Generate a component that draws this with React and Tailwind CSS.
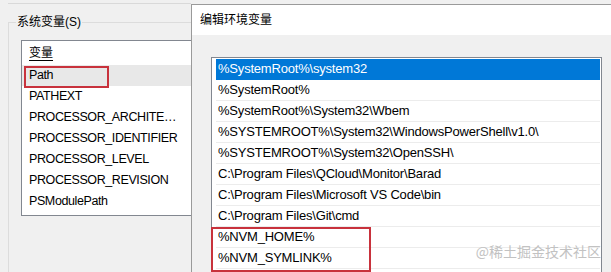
import React from 'react';

const sysVars = [
  'Path',
  'PATHEXT',
  'PROCESSOR_ARCHITECTURE',
  'PROCESSOR_IDENTIFIER',
  'PROCESSOR_LEVEL',
  'PROCESSOR_REVISION',
  'PSModulePath',
];

const pathEntries = [
  '%SystemRoot%\\system32',
  '%SystemRoot%',
  '%SystemRoot%\\System32\\Wbem',
  '%SYSTEMROOT%\\System32\\WindowsPowerShell\\v1.0\\',
  '%SYSTEMROOT%\\System32\\OpenSSH\\',
  'C:\\Program Files\\QCloud\\Monitor\\Barad',
  'C:\\Program Files\\Microsoft VS Code\\bin',
  'C:\\Program Files\\Git\\cmd',
  '%NVM_HOME%',
  '%NVM_SYMLINK%',
];

const App = () => {
  return (
    <div className="relative flex w-[611px] h-[272px] overflow-hidden bg-[#f0f0f0] font-['Liberation_Sans','Noto_Sans_CJK_SC',sans-serif] text-[13px] tracking-[-0.2px] text-black">
      {/* System variables group (behind the dialog) */}
      <div className="w-[191px] shrink-0 overflow-hidden">
        <div className="h-[4px] ml-[8px] border-b border-[#d9d9d9]" />
        <fieldset className="mt-[9px] ml-[8px] h-[300px] border-l border-t border-[#dcdcdc]">
          <legend className="ml-[7px] px-[1px] text-[12px] leading-[18px] tracking-normal">
            系统变量(S)
          </legend>
          <div className="mt-[9px] ml-[12px] w-[200px] h-[176px] border border-[#828790] bg-white text-[12.5px] tracking-[-0.4px]">
            <div className="h-[24px] pl-[7px] flex items-center">
              <span className="text-[12px] tracking-normal underline underline-offset-[3px]">变量</span>
            </div>
            {sysVars.map((name, i) => (
              <div
                key={name}
                className={`relative h-[21px] pl-[7px] flex items-center ${i === 0 ? 'bg-[#e8e8e8]' : ''}`}
              >
                <span className="w-[150px] truncate">{name}</span>
                {i === 0 && (
                  <span className="absolute left-[2px] top-[1px] w-[85px] h-[22px] border-2 border-[#c8323c]" />
                )}
              </div>
            ))}
          </div>
        </fieldset>
      </div>

      {/* Edit environment variable dialog */}
      <div className="relative flex-1 mt-[4px] border-l border-t border-[#9a9a9a] bg-[#f0f0f0]">
        <div className="h-[30px] bg-white flex items-center pl-[8px]">
          <span className="text-[12px] tracking-normal">编辑环境变量</span>
        </div>
        <div className="relative mt-[22px] ml-[19px] w-[391px] h-[260px] border border-[#828790] bg-white pt-[1px] pl-[4px] pr-[1px]">
          {pathEntries.map((p, i) => (
            <div
              key={i}
              className={`h-[21px] pl-[2px] flex items-center border-b ${
                i === 0 ? 'bg-[#0078d7] border-[#0078d7] text-white' : 'border-[#ececec]'
              }`}
            >
              {p}
            </div>
          ))}
          <span className="absolute left-[-1px] top-[169px] w-[160px] h-[45px] border-2 border-[#c8323c]" />
        </div>
      </div>

      <span className="absolute right-[10px] bottom-[10px] font-['Noto_Sans_CJK_SC',sans-serif] text-[14px] tracking-normal text-[#c2c2c2]">
        @稀土掘金技术社区
      </span>
    </div>
  );
};

export default App;
